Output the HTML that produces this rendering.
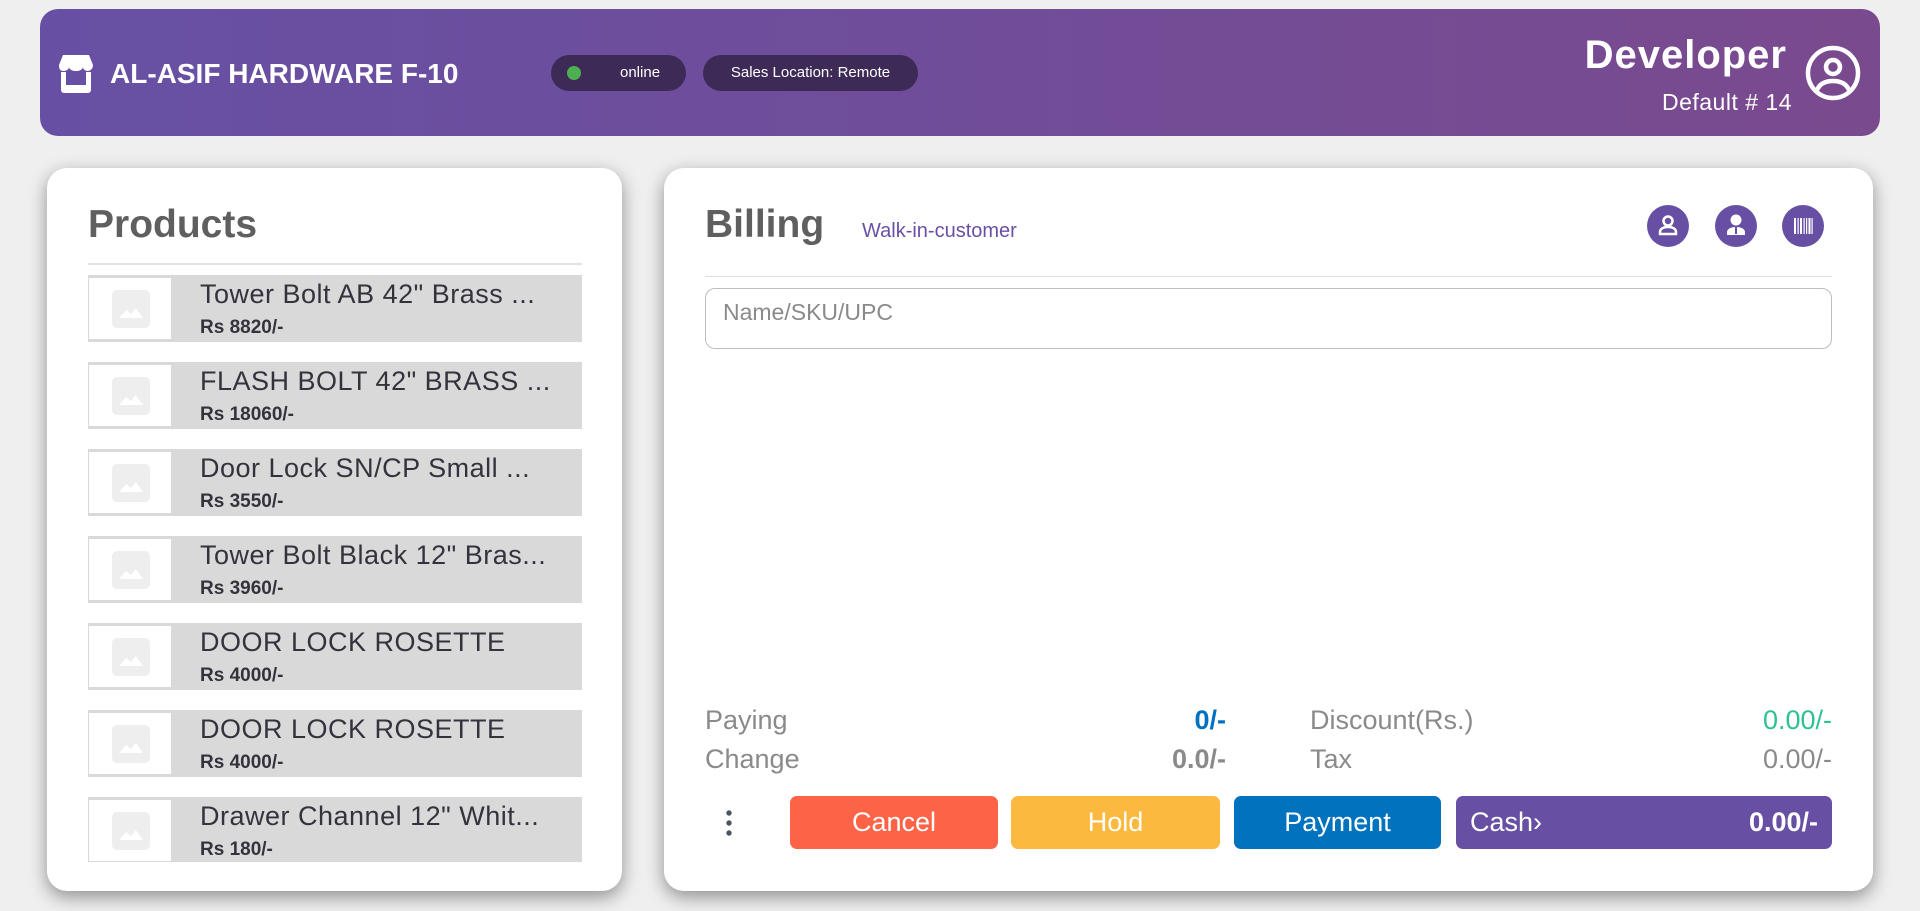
<!DOCTYPE html>
<html><head><meta charset="utf-8"><style>
*{box-sizing:border-box;margin:0;padding:0}
body{width:1920px;height:911px;background:#efefef;font-family:"Liberation Sans",sans-serif;position:relative;overflow:hidden}
.hdr{position:absolute;left:40px;top:9px;width:1840px;height:127px;border-radius:18px;background:linear-gradient(90deg,#6750a4,#7a4a8e);color:#fff}
.abs{position:absolute}
.pill{position:absolute;top:55px;height:36px;border-radius:18px;background:#3d2a57;color:#fff;font-size:15px;line-height:36px}
.card{position:absolute;top:168px;height:723px;background:#fff;border-radius:20px;box-shadow:0 6px 18px rgba(0,0,0,.4)}
.item{position:absolute;left:88px;width:494px;height:67px;background:#d9d9d9;overflow:hidden}
.item .img{position:absolute;left:1px;top:3px;width:82px;height:61px;background:#fff}
.item .ph{position:absolute;left:23px;top:12px;width:38px;height:38px;background:#eee;border-radius:5px}
.item .ph:after{content:"";position:absolute;left:7px;top:18px;width:24px;height:10px;background:#fff;clip-path:polygon(0 100%,30% 20%,50% 60%,70% 0,100% 100%)}
.item .nm{position:absolute;left:112px;top:4px;font-size:27px;color:#33333d;white-space:nowrap;letter-spacing:.5px}
.item .pr{position:absolute;left:112px;top:42px;font-size:19px;font-weight:bold;color:#33333d}
.ic{position:absolute;top:205px;width:42px;height:42px;border-radius:50%;background:#6750a4}
.lbl{position:absolute;font-size:27px;color:#8a8a8a}
.btn{position:absolute;top:796px;height:53px;border-radius:7px;color:#fff;font-size:27px;line-height:53px;text-align:center}
</style></head><body>
<div class="hdr">
 <svg class="abs" style="left:18px;top:44px" width="36" height="40" viewBox="0 0 36 40"><path d="M5 2h26l4 10c0 4-3 6-5.5 6S25 16 25 14c0 2-3 4-6 4h-2c-3 0-6-2-6-4 0 2-2 4-5.5 4S1 16 1 12z" fill="#fff"/><path d="M3 19h5v13h20V19h5v18a3 3 0 0 1-3 3H6a3 3 0 0 1-3-3z" fill="#fff"/></svg>
 <div class="abs" style="left:70px;top:49px;font-size:28px;font-weight:bold">AL-ASIF HARDWARE F-10</div>
 <div class="pill" style="left:511px;width:135px;top:46px"><span class="abs" style="left:16px;top:11px;width:14px;height:14px;border-radius:50%;background:#4caf50"></span><span class="abs" style="left:69px">online</span></div>
 <div class="pill" style="left:663px;width:215px;top:46px;text-align:center">Sales Location: Remote</div>
 <div class="abs" style="right:93px;top:24px;font-size:40px;font-weight:bold;letter-spacing:1px">Developer</div>
 <div class="abs" style="right:88px;top:80px;font-size:23px;letter-spacing:.5px">Default # 14</div>
 <svg class="abs" style="left:1765px;top:36px" width="56" height="56" viewBox="0 0 56 56"><circle cx="28" cy="28" r="25" fill="none" stroke="#fff" stroke-width="4.5"/><circle cx="28" cy="22" r="7" fill="none" stroke="#fff" stroke-width="4.5"/><path d="M12 45c3-7 9-9 16-9s13 2 16 9" fill="none" stroke="#fff" stroke-width="4.5"/></svg>
</div>

<div class="card" style="left:47px;width:575px">
 <div class="abs" style="left:41px;top:35px;font-size:39px;font-weight:bold;color:#5f5f5f">Products</div>
 <div class="abs" style="left:41px;top:95px;width:494px;height:2px;background:#e3e3e3"></div>
</div>
<div class="item" style="top:275px"><div class="img"><div class="ph"></div></div><div class="nm">Tower Bolt AB 42" Brass ...</div><div class="pr">Rs 8820/-</div></div>
<div class="item" style="top:362px"><div class="img"><div class="ph"></div></div><div class="nm">FLASH BOLT 42" BRASS ...</div><div class="pr">Rs 18060/-</div></div>
<div class="item" style="top:449px"><div class="img"><div class="ph"></div></div><div class="nm">Door Lock SN/CP Small ...</div><div class="pr">Rs 3550/-</div></div>
<div class="item" style="top:536px"><div class="img"><div class="ph"></div></div><div class="nm">Tower Bolt Black 12" Bras...</div><div class="pr">Rs 3960/-</div></div>
<div class="item" style="top:623px"><div class="img"><div class="ph"></div></div><div class="nm">DOOR LOCK ROSETTE</div><div class="pr">Rs 4000/-</div></div>
<div class="item" style="top:710px"><div class="img"><div class="ph"></div></div><div class="nm">DOOR LOCK ROSETTE</div><div class="pr">Rs 4000/-</div></div>
<div class="item" style="top:797px;height:65px"><div class="img"><div class="ph"></div></div><div class="nm">Drawer Channel 12" Whit...</div><div class="pr">Rs 180/-</div></div>

<div class="card" style="left:664px;width:1209px"></div>
<div class="abs" style="left:705px;top:203px;font-size:39px;font-weight:bold;color:#5f5f5f">Billing</div>
<div class="abs" style="left:862px;top:220px;font-size:20px;color:#6a4fa6">Walk-in-customer</div>
<div class="ic" style="left:1647px"><svg width="42" height="42" viewBox="0 0 42 42"><circle cx="21" cy="16" r="4.5" fill="none" stroke="#fff" stroke-width="2.5"/><path d="M13 29v-2c0-3 3-5 8-5s8 2 8 5v2z" fill="none" stroke="#fff" stroke-width="2.5"/></svg></div>
<div class="ic" style="left:1715px"><svg width="42" height="42" viewBox="0 0 42 42"><circle cx="21" cy="15" r="5.5" fill="#fff"/><path d="M12 30v-3c0-3 4-5 9-5s9 2 9 5v3z" fill="#fff"/><path d="M21 22v7" stroke="#6750a4" stroke-width="2"/></svg></div>
<div class="ic" style="left:1782px"><svg width="42" height="42" viewBox="0 0 42 42" fill="#fff"><rect x="12" y="13" width="2" height="16"/><rect x="15.5" y="13" width="1.2" height="16"/><rect x="18" y="13" width="2" height="16"/><rect x="21.5" y="13" width="1.2" height="16"/><rect x="24" y="13" width="1.2" height="16"/><rect x="26.5" y="13" width="2" height="16"/><rect x="29.5" y="13" width="1.2" height="16"/></svg></div>
<div class="abs" style="left:705px;top:276px;width:1127px;height:1px;background:#ddd"></div>
<div class="abs" style="left:705px;top:288px;width:1127px;height:61px;border:1.5px solid #bdbdbd;border-radius:10px;font-size:23px;color:#8a8a8a;padding:10px 0 0 17px">Name/SKU/UPC</div>

<div class="lbl" style="left:705px;top:705px">Paying</div>
<div class="lbl" style="left:705px;top:744px">Change</div>
<div class="lbl" style="right:694px;top:705px;color:#0070c0;font-weight:bold">0/-</div>
<div class="lbl" style="right:694px;top:744px;font-weight:bold">0.0/-</div>
<div class="lbl" style="left:1310px;top:705px">Discount(Rs.)</div>
<div class="lbl" style="left:1310px;top:744px">Tax</div>
<div class="lbl" style="right:88px;top:705px;color:#2ec28e">0.00/-</div>
<div class="lbl" style="right:88px;top:744px">0.00/-</div>

<svg class="abs" style="left:724px;top:808px" width="10" height="30"><circle cx="5" cy="5" r="2.7" fill="#4a5560"/><circle cx="5" cy="15" r="2.7" fill="#4a5560"/><circle cx="5" cy="25" r="2.7" fill="#4a5560"/></svg>
<div class="btn" style="left:790px;width:208px;background:#fd6347">Cancel</div>
<div class="btn" style="left:1011px;width:209px;background:#fbb940">Hold</div>
<div class="btn" style="left:1234px;width:207px;background:#0172bd">Payment</div>
<div class="btn" style="left:1456px;width:376px;background:#6750a4;text-align:left;padding-left:14px">Cash›<span style="position:absolute;right:14px;font-weight:bold">0.00/-</span></div>
</body></html>
